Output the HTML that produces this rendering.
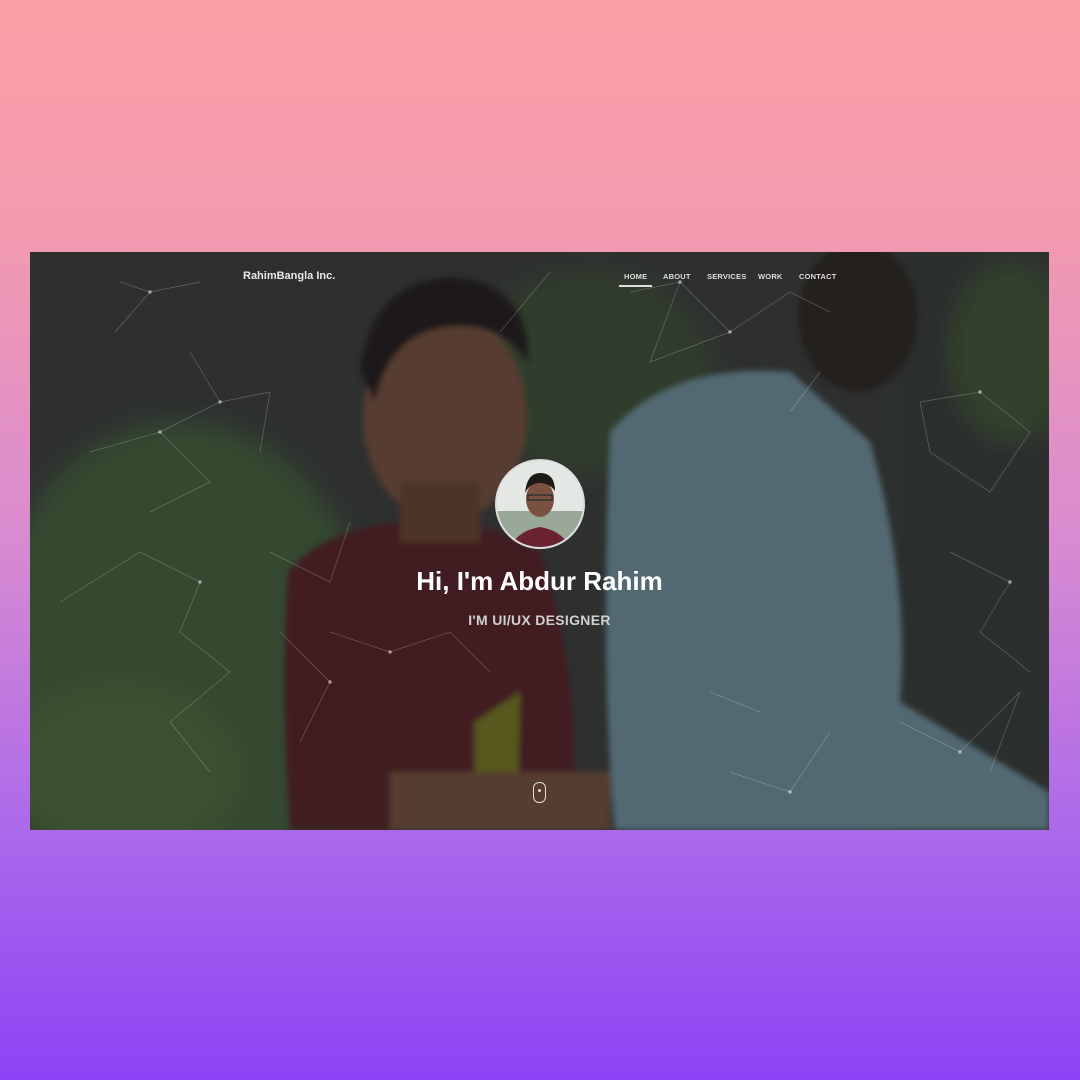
<!DOCTYPE html>
<html><head><meta charset="utf-8"><style>
html,body{margin:0;padding:0}
body{width:1080px;height:1080px;background:linear-gradient(180deg,#fda0a6 0%,#f29ab0 22%,#d88bd0 50%,#ad6aea 76%,#8d43f5 100%);position:relative;overflow:hidden;font-family:"Liberation Sans",sans-serif}
.frame{position:absolute;left:30px;top:252px;width:1019px;height:578px;overflow:hidden;background:#353836}
.frame svg{position:absolute;left:0;top:0}
.brand{position:absolute;left:213px;top:18px;color:#e8e8e8;font-size:11px;font-weight:bold}
.nav{position:absolute;top:20px;left:594px;color:#ddd;font-size:7.5px;font-weight:bold;letter-spacing:.2px}
.nav span{position:absolute;white-space:nowrap}
.ul{position:absolute;left:589px;top:33px;width:33px;height:2px;background:#ddd}
.avatar{position:absolute;left:465px;top:207px;width:86px;height:86px;border-radius:50%;border:2px solid #ddd;overflow:hidden;background:#eee}
h1{position:absolute;left:0;width:1019px;top:314px;margin:0;text-align:center;color:#fff;font-size:26px;font-weight:bold}
.sub{position:absolute;left:0;width:1019px;top:360px;text-align:center;color:#d0d0d0;font-size:14px;font-weight:bold;letter-spacing:.3px}
.mouse{position:absolute;left:503px;top:530px;width:11px;height:19px;border:1.5px solid #ddd;border-radius:6px}
.mouse:after{content:"";position:absolute;left:4px;top:6px;width:3px;height:3px;border-radius:50%;background:#ddd}
</style></head><body>
<div class="frame">
<svg width="1019" height="578" viewBox="0 0 1019 578">
<defs><filter id="b" x="-20%" y="-20%" width="140%" height="140%"><feGaussianBlur stdDeviation="12"/></filter>
<filter id="s"><feGaussianBlur stdDeviation="3"/></filter></defs>
<rect width="1019" height="578" fill="#3a3d3b"/>
<g filter="url(#b)">
<ellipse cx="150" cy="400" rx="190" ry="230" fill="#43603a"/>
<ellipse cx="90" cy="520" rx="120" ry="90" fill="#4d6a3a"/>
<ellipse cx="560" cy="120" rx="120" ry="100" fill="#3e5036"/>
<rect x="870" y="0" width="149" height="578" fill="#363a39"/>
<ellipse cx="980" cy="100" rx="60" ry="90" fill="#415434"/>
</g>
<g filter="url(#s)">
<path d="M580 180 Q640 110 760 120 L840 190 Q880 330 870 450 L1019 540 L1019 578 L585 578 Q570 420 580 180Z" fill="#6d8e9a"/>
<ellipse cx="828" cy="65" rx="60" ry="75" fill="#2c2624"/>
<path d="M258 320 Q300 270 390 270 Q470 270 510 300 Q545 400 545 520 L580 578 L260 578 Q250 440 258 320Z" fill="#552328"/>
<ellipse cx="415" cy="165" rx="82" ry="105" fill="#74503e"/>
<path d="M330 120 Q340 30 420 25 Q500 30 498 110 Q470 70 420 75 Q360 80 345 150Z" fill="#221c1a"/>
<rect x="370" y="230" width="80" height="60" fill="#65422f"/>
<path d="M445 470 L490 440 L488 540 L445 545Z" fill="#767420"/>
<rect x="360" y="520" width="220" height="58" fill="#72503a"/>
</g>
<rect width="1019" height="578" fill="rgba(20,20,22,0.3)"/>
<g stroke="rgba(255,255,255,0.25)" stroke-width="0.7" fill="rgba(255,255,255,0.5)">
<path d="M90 30 L120 40 L170 30 M120 40 L85 80 M160 100 L190 150 L130 180 L180 230 L120 260 M190 150 L240 140 L230 200 M60 200 L130 180 M110 300 L170 330 L150 380 L200 420 L140 470 L180 520 M30 350 L110 300 M240 300 L300 330 L320 270 M250 380 L300 430 L270 490 M600 40 L650 30 L700 80 L760 40 L800 60 M650 30 L620 110 L700 80 M890 150 L950 140 L1000 180 L960 240 L900 200Z M920 300 L980 330 L950 380 L1000 420 M870 470 L930 500 L990 440 L960 520 M700 520 L760 540 L800 480 M300 380 L360 400 L420 380 L460 420 M470 80 L520 20 M790 120 L760 160 M680 440 L730 460" fill="none"/>
<circle cx="120" cy="40" r="1.5"/><circle cx="190" cy="150" r="1.5"/><circle cx="130" cy="180" r="1.5"/><circle cx="170" cy="330" r="1.5"/><circle cx="650" cy="30" r="1.5"/><circle cx="700" cy="80" r="1.5"/><circle cx="950" cy="140" r="1.5"/><circle cx="980" cy="330" r="1.5"/><circle cx="930" cy="500" r="1.5"/><circle cx="760" cy="540" r="1.5"/><circle cx="360" cy="400" r="1.5"/><circle cx="300" cy="430" r="1.5"/>
</g>
</svg>
<div class="brand">RahimBangla Inc.</div>
<div class="nav"><span style="left:0">HOME</span><span style="left:39px">ABOUT</span><span style="left:83px">SERVICES</span><span style="left:134px">WORK</span><span style="left:175px">CONTACT</span></div>
<div class="ul"></div>
<div class="avatar"><svg width="86" height="86"><rect width="86" height="86" fill="#e4e8e4"/><rect y="50" width="86" height="36" fill="#9aa89a"/><path d="M14 86 Q20 70 43 66 Q66 70 72 86Z" fill="#6a2230"/><ellipse cx="43" cy="38" rx="14" ry="18" fill="#7a5040"/><path d="M28 32 Q30 12 43 12 Q58 12 58 30 Q52 22 43 22 Q33 22 28 32Z" fill="#1e1a18"/><rect x="31" y="34" width="24" height="5" fill="none" stroke="#333" stroke-width="1.5"/></svg></div>
<h1>Hi, I'm Abdur Rahim</h1>
<div class="sub">I'M UI/UX DESIGNER</div>
<div class="mouse"></div>
</div>
</body></html>
